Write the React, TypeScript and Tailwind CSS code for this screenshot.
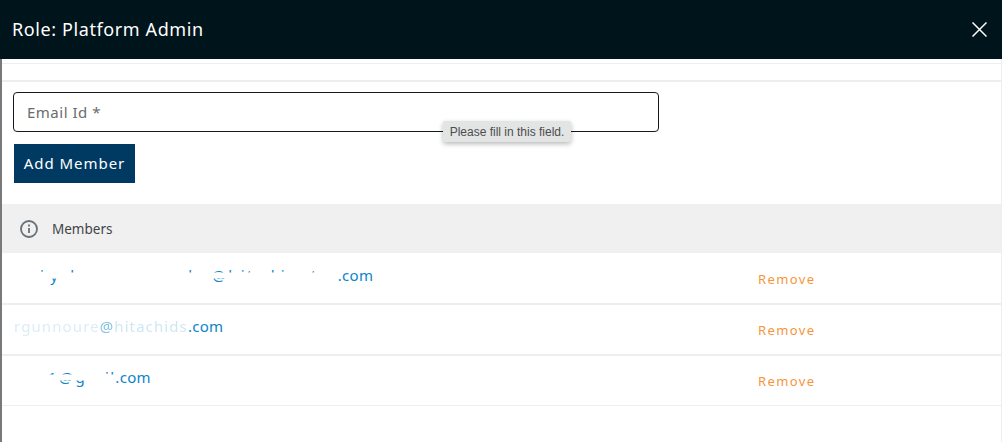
import React from "react";

const font = "[font-family:'Noto_Sans',sans-serif]";

function Top({ c, ml }: { c: string; ml: string }) {
  return <span className={`inline-block [clip-path:inset(0_0_62%_0)] ${ml}`}>{c}</span>;
}
function Bot({ c, ml }: { c: string; ml: string }) {
  return <span className={`inline-block [clip-path:inset(68%_0_0_0)] ${ml}`}>{c}</span>;
}

function Row({ children, last }: { children: React.ReactNode; last?: boolean }) {
  return (
    <div className={`flex items-center pl-[12px] ${last ? "h-[50px] border-b" : "h-[51px] border-b-2"} border-[#eeeeee]`}>
      <div className="w-[744px] flex items-center pb-[7px] text-[15px] leading-[20px] tracking-[0.3px] text-[#0d84c8] whitespace-nowrap">
        {children}
      </div>
      <button className="pt-[2px] text-[13px] tracking-[1.4px] text-[#f7943b]">Remove</button>
    </div>
  );
}

export default function App() {
  return (
    <div className={`relative h-[442px] w-[1002px] overflow-hidden bg-white ${font}`}>
      <header className="flex h-[59px] items-center justify-between bg-[#00141c] pb-[1px] pl-[12px] pr-[15px]">
        <h1 className="text-[18px] font-normal tracking-[0.6px] text-white">Role: Platform Admin</h1>
        <svg width="15" height="15" viewBox="0 0 15 15" fill="none" stroke="#ffffff" strokeWidth="1.5" aria-label="Close">
          <path d="M0.5 0.5l14 14M14.5 0.5l-14 14" />
        </svg>
      </header>

      <div className="flex h-[383px]">
        <div className="w-[2px] shrink-0 bg-[#77797b]" />
        <main className="min-w-0 flex-1 border-r border-[#eeeeee]">
          <div className="mt-[4px] h-[19px] border-t border-b-2 border-[#eeeeee]" />
          <section className="relative h-[122px] pl-[11px] pt-[10px]">
            <div className="flex h-[40px] w-[646px] items-center rounded-[4px] border border-[#16191f] pl-[13px] text-[15px] tracking-[0.5px] text-[#6b6b6b]">
              Email Id *
            </div>
            <button className="ml-[1px] mt-[12px] h-[39px] w-[121px] bg-[#003a63] text-[15px] tracking-[0.95px] text-white">
              Add Member
            </button>
            <div className="absolute left-[441px] top-[39px] flex h-[21px] w-[128px] items-center justify-center rounded-[2px] bg-[#e3e4e4] text-[12px] text-[#4d4d4d] shadow-[0_2px_5px_rgba(0,0,0,0.28)] [font-family:'Liberation_Sans',sans-serif]">
              Please fill in this field.
            </div>
          </section>
          <div className="flex h-[49px] items-center gap-[14px] bg-[#f0f0f0] pl-[18px] pt-[1px] text-[13.5px] text-[#3f4448]">
            <svg width="18" height="18" viewBox="0 0 18 18" fill="none" stroke="#687078" strokeWidth="1.8">
              <circle cx="9" cy="9" r="8" />
              <path d="M9 8v5" />
              <path d="M9 4.6v1.8" />
            </svg>
            <span>Members</span>
          </div>
          <div className="h-px" />
          <Row>
            <Top c="i" ml="ml-[26px]" />
            <Bot c="y" ml="ml-[6px]" />
            <Top c="l" ml="ml-[12px]" />
            <Top c="k" ml="ml-[114px]" />
            <Top c="@" ml="ml-[15px]" />
            <Bot c="@" ml="-ml-[13px]" />
            <Top c="h" ml="ml-[2px]" />
            <Top c="i" ml="ml-[3px]" />
            <Top c="t" ml="ml-[2px]" />
            <Top c="l" ml="ml-[18px]" />
            <Top c="i" ml="ml-[6px]" />
            <Top c="t" ml="ml-[26px]" />
            <span className="ml-[21px]">.com</span>
          </Row>
          <Row>
            <span className="tracking-[1.1px] opacity-15 blur-[0.5px]">rgunnoure</span>
            <span className="tracking-[1.1px] opacity-50 blur-[0.3px]">@</span>
            <span className="tracking-[1.1px] opacity-20 blur-[0.5px]">hitachids</span>
            <span>.com</span>
          </Row>
          <Row last>
            <Top c="1" ml="ml-[34px]" />
            <Bot c="@" ml="ml-[2px]" />
            <Top c="@" ml="-ml-[13px]" />
            <Bot c="g" ml="ml-[2px]" />
            <Top c="i" ml="ml-[20px]" />
            <Top c="l" ml="ml-[1px]" />
            <span className="ml-[1px]">.com</span>
          </Row>
        </main>
      </div>
    </div>
  );
}
